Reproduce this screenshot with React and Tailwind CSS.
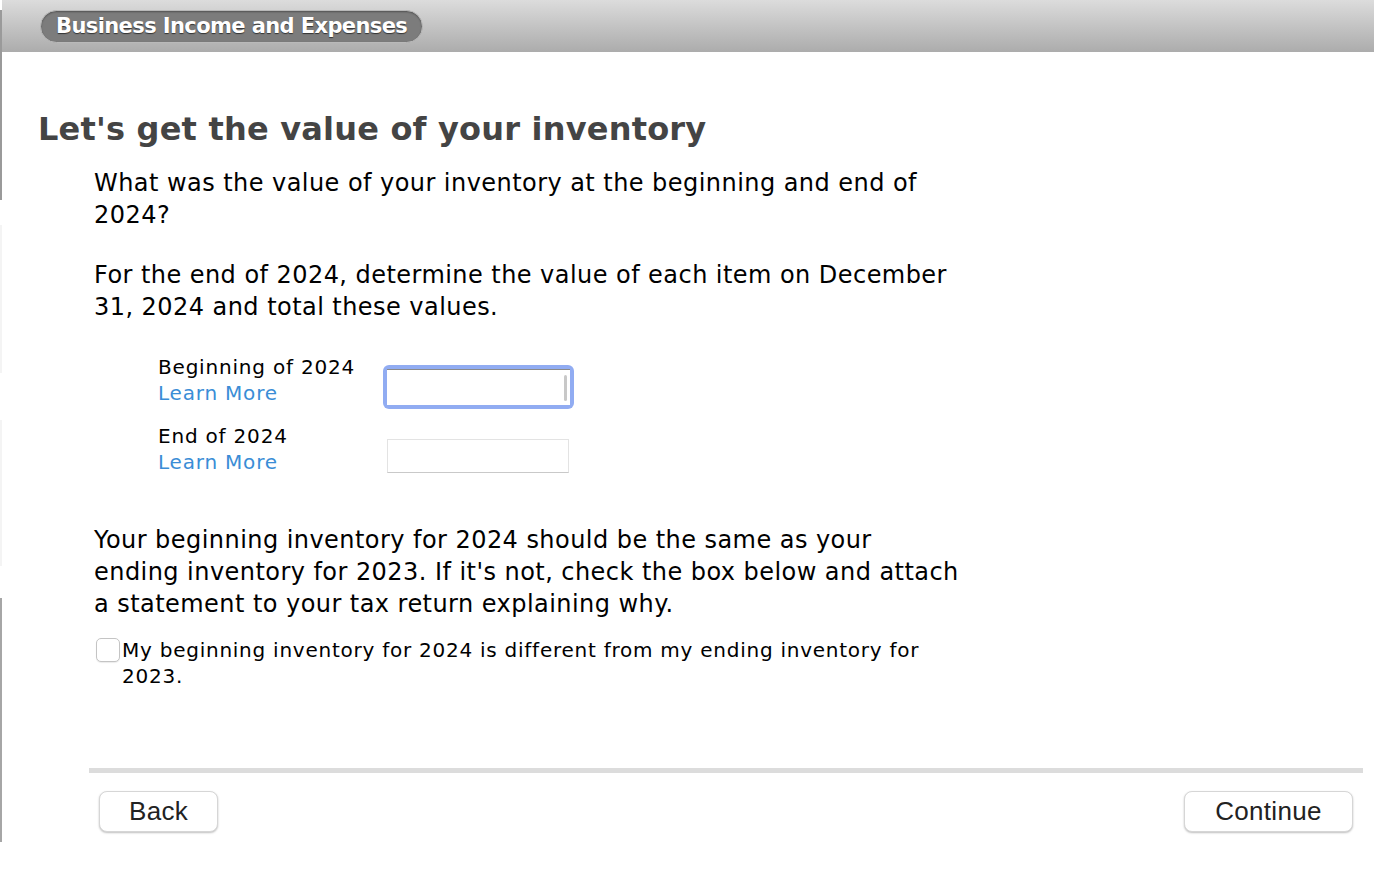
export default function App() {
  const font = { fontFamily: '"DejaVu Sans", "Noto Sans", sans-serif' }
  const btnFont = { fontFamily: '"Liberation Sans", Arial, sans-serif' }

  return (
    <div className="relative w-[1374px] h-[886px] bg-white flex overflow-hidden" style={font}>
      {/* left window edge */}
      <div className="w-[2px] flex flex-col shrink-0">
        <div className="h-[10px]" />
        <div className="h-[190px] bg-[#9a9a9a]" />
        <div className="h-[25px]" />
        <div className="h-[148px] bg-[#f4f4f4]" />
        <div className="h-[47px]" />
        <div className="h-[146px] bg-[#f4f4f4]" />
        <div className="h-[32px]" />
        <div className="h-[244px] bg-[#a6a6a6]" />
      </div>

      <div className="flex-1 flex flex-col min-w-0">
        {/* Top bar */}
        <header className="h-[52px] bg-gradient-to-b from-[#dcdcdc] to-[#acacac] pl-[38px] pt-[10px]">
          <div className="inline-flex items-center h-[33px] pl-[15px] pr-[15px] rounded-full bg-[#7c7c7c] border border-[#b9b9b9] shadow-[inset_0_1px_2px_rgba(0,0,0,0.35)]">
            <span className="text-white font-bold text-[21px] tracking-[-0.6px] [text-shadow:0_1px_1px_rgba(0,0,0,0.6)]">
              Business Income and Expenses
            </span>
          </div>
        </header>

        {/* Page content */}
        <main className="flex-1 flex flex-col">
          <h1 className="mt-[53px] ml-[36px] text-[32px] leading-[48px] font-bold text-[#444444] tracking-[0.2px]">
            Let's get the value of your inventory
          </h1>

          <div className="ml-[92px] w-[882px] text-black">
            <p className="text-[24px] leading-[32px] mt-[14px] tracking-[0.45px]">
              What was the value of your inventory at the beginning and end of 2024?
            </p>
            <p className="text-[24px] leading-[32px] mt-[28px] tracking-[0.45px]">
              For the end of 2024, determine the value of each item on December 31, 2024 and total these values.
            </p>

            <div className="mt-[31px] ml-[64px] flex flex-col gap-[14px] tracking-[0.8px]">
              <div className="flex items-start">
                <div className="w-[225px] text-[20px] leading-[26px]">
                  <div>Beginning of 2024</div>
                  <div className="text-[#3a8dd6]">Learn More</div>
                </div>
                <div className="mt-[11px] w-[191px] h-[44px] rounded-[6px] bg-[#91acf2] p-[4px]">
                  <div className="h-full bg-white border-t border-[#8a8a8a] flex justify-end items-center pr-[3px]">
                    <div className="w-[3px] h-[26px] rounded-full bg-[#c8c8c8]" />
                  </div>
                </div>
              </div>
              <div className="flex items-start">
                <div className="w-[229px] text-[20px] leading-[26px]">
                  <div>End of 2024</div>
                  <div className="text-[#3a8dd6]">Learn More</div>
                </div>
                <div className="mt-[16px] w-[182px] h-[34px] bg-white border border-[#e3e3e3] border-b-[#c9c9c9]" />
              </div>
            </div>

            <p className="text-[24px] leading-[32px] mt-[49px] tracking-[0.45px]">
              Your beginning inventory for 2024 should be the same as your
              <br />
              ending inventory for 2023. If it's not, check the box below and attach a statement to your tax return explaining why.
            </p>

            <label className="mt-[17px] ml-[2px] flex items-start">
              <span className="mt-[1px] w-[24px] h-[24px] shrink-0 rounded-[5px] border border-[#c4c4c4] bg-white shadow-[0_1px_1px_rgba(0,0,0,0.08)]" />
              <span className="ml-[2px] w-[830px] text-[20px] leading-[26px] tracking-[0.75px]">
                My beginning inventory for 2024 is different from my ending inventory for 2023.
              </span>
            </label>
          </div>

          {/* Footer nav */}
          <div className="mt-auto mb-[54px] ml-[87px] mr-[11px]">
            <div className="h-[5px] bg-[#dcdcdc]" />
            <div className="mt-[18px] flex justify-between px-[10px]">
              <button
                className="w-[119px] h-[41px] rounded-[8px] bg-white border border-[#d6d6d6] shadow-[0_1px_2px_rgba(0,0,0,0.25)] text-[26px] tracking-[0.3px] text-[#222]"
                style={btnFont}
              >
                Back
              </button>
              <button
                className="w-[169px] h-[41px] rounded-[8px] bg-white border border-[#d6d6d6] shadow-[0_1px_2px_rgba(0,0,0,0.25)] text-[26px] tracking-[0.3px] text-[#222]"
                style={btnFont}
              >
                Continue
              </button>
            </div>
          </div>
        </main>
      </div>
    </div>
  )
}
